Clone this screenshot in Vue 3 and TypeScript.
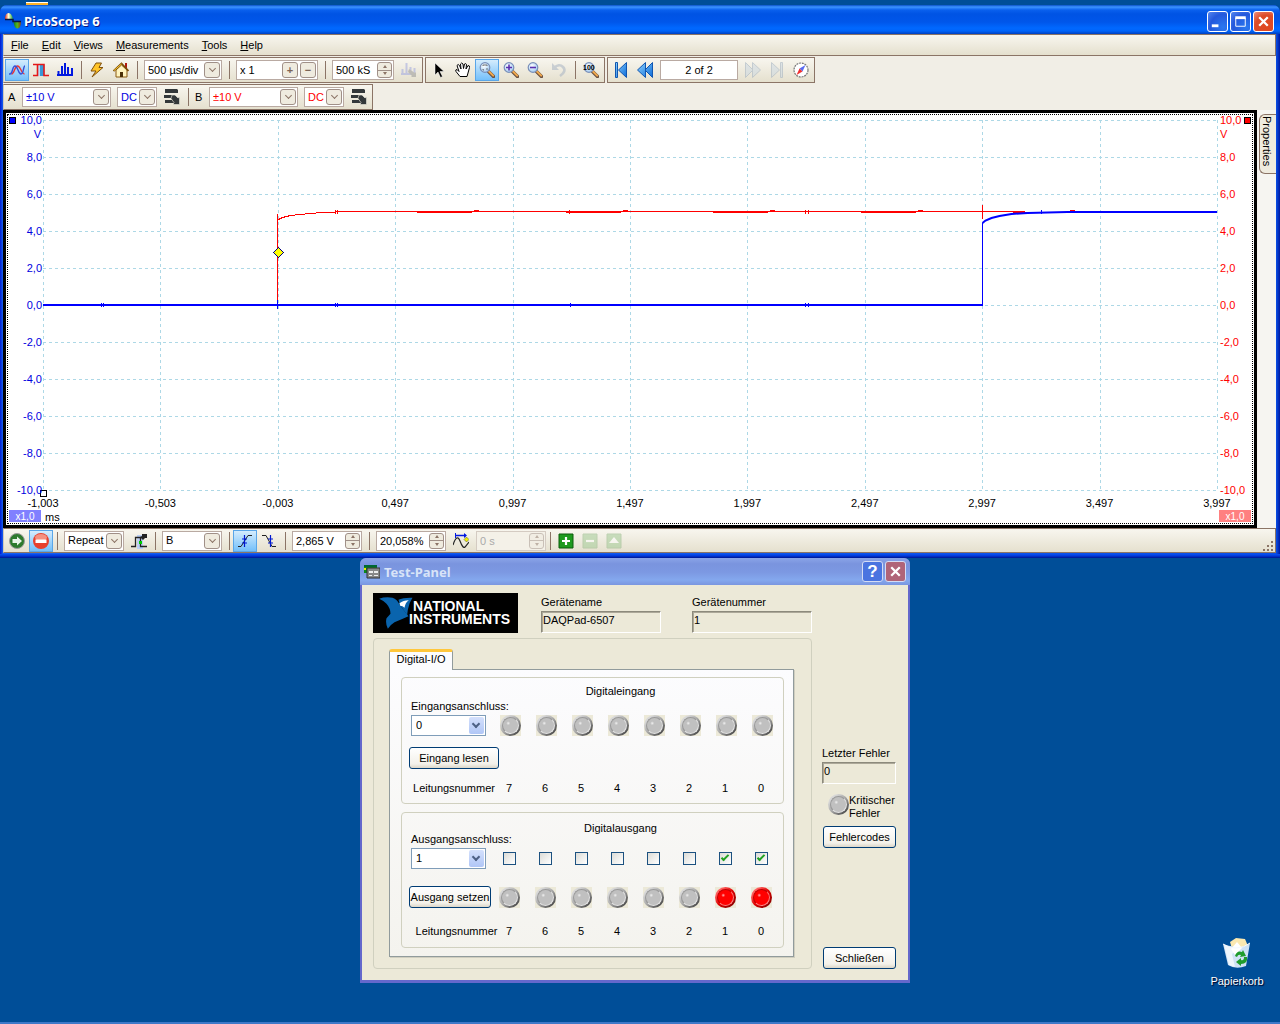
<script setup lang="ts">
import { ref } from 'vue'

const menus = ['File', 'Edit', 'Views', 'Measurements', 'Tools', 'Help']

const plotWidth = 1174
const plotHeight = 370
const voltTicks = ['10,0', '8,0', '6,0', '4,0', '2,0', '0,0', '-2,0', '-4,0', '-6,0', '-8,0', '-10,0']
const timeTicks = ['-1,003', '-0,503', '-0,003', '0,497', '0,997', '1,497', '1,997', '2,497', '2,997', '3,497', '3,997']
const gridX = timeTicks.map((_, i) => Math.round((i * plotWidth) / 10))
const gridY = voltTicks.map((_, i) => (i * plotHeight) / 10)

const glitches = [374, 523, 670, 818, 970]
const zeroMarks = [58, 60, 292, 294, 527, 762, 765]

const lines = [7, 6, 5, 4, 3, 2, 1, 0]
const inputPort = ref('0')
const outputPort = ref('1')
const outputs = ref<Record<number, boolean>>({ 7: false, 6: false, 5: false, 4: false, 3: false, 2: false, 1: true, 0: true })
</script>

<template>
  <div class="desktop">
    <svg class="defs" width="0" height="0" aria-hidden="true">
      <defs>
        <radialGradient id="lens" cx=".4" cy=".35" r=".7">
          <stop offset="0" stop-color="#fff" /><stop offset="1" stop-color="#9cc8f0" />
        </radialGradient>
        <linearGradient id="nav" x1="0" y1="0" x2="1" y2="1">
          <stop offset="0" stop-color="#8fd4ff" /><stop offset="1" stop-color="#0a6ad8" />
        </linearGradient>
        <linearGradient id="hump"><stop offset="0" stop-color="#e03020" /><stop offset=".45" stop-color="#ffffd8" /><stop offset="1" stop-color="#18a030" /></linearGradient>
        <linearGradient id="dip"><stop offset="0" stop-color="#0c7a20" /><stop offset=".5" stop-color="#58b820" /><stop offset="1" stop-color="#8a3c10" /></linearGradient>
        <symbol id="magnifier" viewBox="0 0 16 16">
          <path d="M9.500 9.500l5 5" stroke="#6b5040" stroke-width="3.400" stroke-linecap="round" />
          <path d="M9.800 9.200l4.400 4.400" stroke="#f0a84c" stroke-width="2" stroke-linecap="round" />
          <circle cx="6" cy="5.500" r="4.800" fill="url(#lens)" stroke="#7a8fb8" stroke-width="1.200" />
        </symbol>
        <symbol id="list-edit" viewBox="0 0 16 16">
          <path d="M1 0h12l1 1v3H1zM0 6h9v3H0zM1 11h9v3H1z" fill="#33383a" />
          <path d="M8 6h3l3 3 1.500-1v7.500H9l1-2-3-4z" fill="#33383a" stroke="#efecdf" stroke-width=".6" />
        </symbol>
        <symbol id="cross" viewBox="0 0 20 20">
          <path d="M5.500 5.500l9 9M14.500 5.500l-9 9" stroke="#fff" stroke-width="2.400" />
        </symbol>
      </defs>
    </svg>

    <i class="shortcut-edge"></i>

    <main class="window">
      <header class="titlebar">
        <svg class="app-icon" viewBox="0 0 16 16">
          <path d="M0 6.500Q0 0 3.500 0T8 6.500z" fill="url(#hump)" />
          <path d="M8.500 8H16q0 7.500-3.500 7.500T8.500 8z" fill="url(#dip)" />
          <path d="M0 6.500h8v2h8" fill="none" stroke="#0a1440" stroke-width="1.500" />
        </svg>
        <h1>PicoScope 6</h1>
        <div class="caption-buttons">
          <button class="cap" aria-label="Minimize"><svg viewBox="0 0 20 20"><path d="M4 13h7v3H4z" fill="#fff" /></svg></button>
          <button class="cap" aria-label="Maximize"><svg viewBox="0 0 20 20"><path d="M5 6.500h10V15H5z" fill="none" stroke="#fff" /><path d="M4.500 4.500h11v3h-11z" fill="#fff" /></svg></button>
          <button class="cap close" aria-label="Close"><svg><use href="#cross" /></svg></button>
        </div>
      </header>

      <div class="client">
        <nav class="menubar">
          <button v-for="m in menus" :key="m"><u>{{ m[0] }}</u>{{ m.slice(1) }}</button>
        </nav>

        <div class="tool-row">
          <div class="strip">
            <button class="tool on" aria-label="Scope mode"><svg viewBox="0 0 16 16">
              <path d="M0 12C3 12 3 4 6 4s4 8 7 8" transform="translate(2.500 0)" fill="none" stroke="#e33" stroke-width="1.400" />
              <path d="M0 12h1C4 12 3 4 6 4s3 8 6 8 2-8 4-8" fill="none" stroke="#3550d8" stroke-width="1.400" /></svg></button>
            <button class="tool" aria-label="Persistence mode"><svg viewBox="0 0 16 16">
              <path d="M4 3h8v11H4z" fill="#b4dcf8" /><path d="M7 3h4v11H7z" fill="#3898d8" />
              <path d="M0 13.500h4.500V2.500M0 2.500h11v11H16" fill="none" stroke="#e41818" stroke-width="1.600" /></svg></button>
            <button class="tool" aria-label="Spectrum mode"><svg viewBox="0 0 16 16">
              <path d="M0 13h16M1.500 13V9M5 13V4M8 13V1M11 13V5M15 13V6" stroke="#0018e0" stroke-width="2" /></svg></button>
            <i class="sep"></i>
            <button class="tool" aria-label="Auto setup"><svg viewBox="0 0 16 16">
              <path d="M7 1h5.500L10 5.500h4L3 15l4-6H2z" fill="#ffc428" stroke="#80500c" /></svg></button>
            <button class="tool" aria-label="Home"><svg viewBox="0 0 16 16">
              <path d="M12 1h2v5h-2z" fill="#b01810" /><path d="M3 8v7h11V8L8.500 3z" fill="#fff4c0" stroke="#8a5a10" />
              <path d="M.500 9L8.500 1.500l7 7.500" fill="none" stroke="#7a4c08" stroke-width="1.800" /><path d="M1 8.500L8.500 2" stroke="#ffcc30" />
              <path d="M7 10h3v5H7z" fill="#4a3008" /></svg></button>
            <i class="sep"></i>
            <label class="box w78"><select aria-label="Timebase"><option>500 µs/div</option></select><i class="drop"></i></label>
            <i class="sep"></i>
            <div class="box w82"><input value="x 1" aria-label="Zoom factor" /><button class="step">+</button><button class="step">−</button></div>
            <i class="sep"></i>
            <div class="box w62"><input value="500 kS" aria-label="Samples" /><span class="spin"><button aria-label="Up"></button><button aria-label="Down"></button></span></div>
            <button class="tool faded" aria-label="Spectrum options"><svg viewBox="0 0 16 16">
              <path d="M0 12h15M1.500 12V7M5.500 12V1M9.500 12V5M13.500 12V6" stroke="#a0a8e0" stroke-width="2" />
              <path d="M8 7l6 4 1-1v5h-5l1-1-4-4z" fill="#999" /></svg></button>
          </div>

          <div class="strip">
            <button class="tool" aria-label="Pointer"><svg viewBox="0 0 16 16"><path d="M4 1v12l3-3 2.500 5.500 2-1L9 9.500h4z" fill="#000" stroke="#fff" stroke-width=".5" /></svg></button>
            <button class="tool" aria-label="Hand"><svg viewBox="0 0 16 16">
              <path d="M5 14.500L1 9.500Q0 7.500 2 7.500l2 2-2-6q1-2 2.500 0L6 7 5.500 2q1-2 2.500 0l.500 4.500L9.500 2q1.500-1 2 .5L11 7l2-3.500q2 0 1.500 2L13 11l-1 3.500z" fill="#fff" stroke="#000" /></svg></button>
            <button class="tool on" aria-label="Zoom window"><svg viewBox="0 0 16 16"><use href="#magnifier" /><path d="M4 4V3h4v1M4 7v1h1M8 6v2" fill="none" stroke="#555" stroke-width=".8" /></svg></button>
            <button class="tool" aria-label="Zoom in"><svg viewBox="0 0 16 16"><use href="#magnifier" /><path d="M3 5.500h6M6 2.500v6" stroke="#5a30b0" stroke-width="1.600" /></svg></button>
            <button class="tool" aria-label="Zoom out"><svg viewBox="0 0 16 16"><use href="#magnifier" /><path d="M3 5.500h6" stroke="#5a30b0" stroke-width="1.600" /></svg></button>
            <button class="tool faded" aria-label="Undo zoom"><svg viewBox="0 0 16 16"><path d="M3 6q5-5 9-1t-3 9" fill="none" stroke="#a8b4c4" stroke-width="2.600" /><path d="M1 1v7h7z" fill="#a8b4c4" /></svg></button>
            <i class="sep"></i>
            <button class="tool" aria-label="Zoom 100"><svg viewBox="0 0 16 16"><use href="#magnifier" /><text x="0" y="8" class="hundred">100</text></svg></button>
          </div>

          <div class="strip">
            <button class="tool" aria-label="First"><svg viewBox="0 0 16 16"><path d="M2.500.5h2v15h-2zM13.500.5v15L5.500 8z" fill="url(#nav)" stroke="#1056b0" /></svg></button>
            <button class="tool" aria-label="Previous"><svg viewBox="0 0 16 16"><path d="M8.500.5v15L.500 8zM15.500.5v15L8 8z" fill="url(#nav)" stroke="#1056b0" /></svg></button>
            <div class="box w78"><input class="mid" value="2 of 2" aria-label="Waveform number" /></div>
            <button class="tool faded" aria-label="Next"><svg viewBox="0 0 16 16"><path d="M.500.5v15L8 8zM7.500.5v15L15.500 8z" fill="#cdd9e2" stroke="#a0b0c0" /></svg></button>
            <button class="tool faded" aria-label="Last"><svg viewBox="0 0 16 16"><path d="M2.500.5v15L10.500 8zM11.500.5h2v15h-2z" fill="#cdd9e2" stroke="#a0b0c0" /></svg></button>
            <button class="tool" aria-label="Navigator"><svg viewBox="0 0 16 16">
              <circle cx="8" cy="8" r="7" fill="#fff" stroke="#777" stroke-width="1.200" stroke-dasharray="2 .8" />
              <path d="M12.500 3L9.500 9.500l-3-3z" fill="#5a6cf0" /><path d="M3.500 13l3-6.500 3 3z" fill="#f03030" /></svg></button>
          </div>
        </div>

        <div class="tool-row">
          <div class="strip">
            <span class="chan">A</span>
            <label class="box w89 blue"><select aria-label="Channel A range"><option>±10 V</option></select><i class="drop"></i></label>
            <label class="box w40 blue"><select aria-label="Channel A coupling"><option>DC</option></select><i class="drop"></i></label>
            <button class="tool" aria-label="Channel A options"><svg><use href="#list-edit" /></svg></button>
            <i class="sep"></i>
            <span class="chan">B</span>
            <label class="box w89 red"><select aria-label="Channel B range"><option>±10 V</option></select><i class="drop"></i></label>
            <label class="box w40 red"><select aria-label="Channel B coupling"><option>DC</option></select><i class="drop"></i></label>
            <button class="tool" aria-label="Channel B options"><svg><use href="#list-edit" /></svg></button>
          </div>
        </div>

        <div class="view-row">
          <section class="scope">
            <div class="scope-inner">
              <i class="knob a"></i><i class="knob b"></i>
              <ol class="volts left">
                <li v-for="(v, i) in voltTicks" :key="v">{{ v }}<small v-if="i === 0">V</small></li>
              </ol>
              <svg class="plot" :viewBox="`0 0 ${plotWidth} ${plotHeight}`" preserveAspectRatio="none">
                <g class="grid">
                  <line v-for="x in gridX" :key="'x' + x" :x1="x" :x2="x" y1="0" :y2="plotHeight" />
                  <line v-for="y in gridY" :key="'y' + y" :y1="y" :y2="y" x1="0" :x2="plotWidth" />
                </g>
                <g class="trace-b">
                  <path d="M234.500 185V94M234.500 99h2l3-1.500 6-1.500 8-1.200 14-1.300 12-1 14-.5 5-.5H982" />
                  <path d="M939.500 85v14" />
                  <template v-for="g in glitches" :key="g">
                    <path :d="`M${g} 92.500h55M${g + 57} 90.500h5`" />
                  </template>
                  <path d="M292.500 90v4M294.500 90v4M526.500 90v4M762.500 90v4M765.500 90v4" />
                </g>
                <g class="trace-a">
                  <path d="M0 185H939.500" class="thick" />
                  <path d="M939.500 185V103" />
                  <path d="M939.500 103l3-2.500 6-2.500 8-2 12-2 16-1 40-1H1174" class="bold" />
                  <path d="M234.500 180v9" />
                  <path v-for="m in zeroMarks" :key="m" :d="`M${m}.5 183v4`" />
                  <path d="M998.500 90v4" />
                </g>
                <path d="M235.500 127.500l5 5-5 5-5-5z" fill="#ff0" stroke="#000080" />
                <rect x="-2.500" y="370.500" width="6" height="6" fill="#fff" stroke="#000" />
              </svg>
              <ol class="volts right">
                <li v-for="(v, i) in voltTicks" :key="v">{{ v }}<small v-if="i === 0">V</small></li>
              </ol>
              <ol class="times"><li v-for="t in timeTicks" :key="t"><span>{{ t }}</span></li></ol>
              <div class="scales">
                <b class="chip blue-chip">x1,0</b><span>ms</span><b class="chip red-chip">x1,0</b>
              </div>
            </div>
          </section>
          <aside><button class="props">Properties</button></aside>
        </div>

        <footer class="strip status">
          <button class="tool" aria-label="Start"><svg viewBox="0 0 16 16"><circle cx="8" cy="8" r="7.500" fill="#2d7a2d" stroke="#9a9a9a" /><path d="M3.500 6H8V3.500L13 8l-5 4.500V10H3.500z" fill="#e8f4e8" /></svg></button>
          <button class="tool on" aria-label="Stop"><svg viewBox="0 0 16 16"><circle cx="8" cy="8" r="8" fill="#e8402c" /><ellipse cx="8" cy="4.500" rx="6" ry="3.500" fill="#f49080" /><path d="M2.500 6.500h11v3.500h-11z" fill="#fff" /></svg></button>
          <i class="sep"></i>
          <label class="box w60"><select aria-label="Trigger mode"><option>Repeat</option></select><i class="drop"></i></label>
          <button class="tool" aria-label="Advanced trigger"><svg viewBox="0 0 16 16"><path d="M6 2h6v14H6z" fill="#bcd0f4" /><path d="M0 13.500h4.500v-9h5v9H16" fill="none" stroke="#222" stroke-width="1.300" /><path d="M9 4l2-1V1h5v4h-2l-2 2z" fill="#222" /><path d="M8 8h3v3H8z" fill="#0c0" /></svg></button>
          <i class="sep"></i>
          <label class="box w60"><select aria-label="Trigger channel"><option>B</option></select><i class="drop"></i></label>
          <i class="sep"></i>
          <button class="tool on" aria-label="Rising edge"><svg viewBox="0 0 16 16"><path d="M1 13.500h3l7-11h4" fill="none" stroke="#222" /><path d="M7.500 2v12M5 6h5M5 10h5" stroke="#0018d0" stroke-width="1.200" /></svg></button>
          <button class="tool" aria-label="Falling edge"><svg viewBox="0 0 16 16"><path d="M1 2.500h4l6 11h4" fill="none" stroke="#222" /><path d="M9.500 2v12M7 6h5M7 10h5" stroke="#0018d0" stroke-width="1.200" /></svg></button>
          <i class="sep"></i>
          <div class="box w70"><input value="2,865 V" aria-label="Threshold" /><span class="spin"><button aria-label="Up"></button><button aria-label="Down"></button></span></div>
          <i class="sep"></i>
          <div class="box w70"><input value="20,058%" aria-label="Pre-trigger" /><span class="spin"><button aria-label="Up"></button><button aria-label="Down"></button></span></div>
          <button class="tool" aria-label="Post-trigger delay"><svg viewBox="0 0 16 16"><path d="M0 12q4-12 7-4t5 6l4-5" fill="none" stroke="#222" stroke-width="1.200" /><path d="M3 2.500h10" stroke="#0018e0" stroke-width="1.500" /><path d="M11 0l3 2.500L11 5zM2 0h1v5H2z" fill="#0018e0" /><path d="M13.500 4l2.500 2.500L13.500 9 11 6.500z" fill="#ee0" stroke="#444" stroke-width=".5" /></svg></button>
          <div class="box w70 off"><input value="0 s" disabled aria-label="Delay" /><span class="spin"><button disabled aria-label="Up"></button><button disabled aria-label="Down"></button></span></div>
          <i class="sep tight"></i>
          <button class="tool" aria-label="Add measurement"><svg viewBox="0 0 16 16"><path d="M1 1h14v14H1z" fill="#1f9a1f" stroke="#0c5c0c" /><path d="M4 8h8M8 4v8" stroke="#fff" stroke-width="2.200" /></svg></button>
          <button class="tool faded" aria-label="Delete measurement"><svg viewBox="0 0 16 16"><path d="M1 1h14v14H1z" fill="#a4cc98" stroke="#94b888" /><path d="M4 8h8" stroke="#fff" stroke-width="2.200" /></svg></button>
          <button class="tool faded" aria-label="Edit measurement"><svg viewBox="0 0 16 16"><path d="M1 1h14v14H1z" fill="#a4cc98" stroke="#94b888" /><path d="M8 4l5 6H3z" fill="#fff" /></svg></button>
          <svg class="grip" viewBox="0 0 12 12"><path d="M9 1h2v2H9zM5 5h2v2H5zM9 5h2v2H9zM1 9h2v2H1zM5 9h2v2H5zM9 9h2v2H9z" fill="#8b7466" /></svg>
        </footer>
      </div>
    </main>

    <section class="dialog">
      <header class="dlg-title">
        <svg class="dlg-icon" viewBox="0 0 16 16"><path d="M0 1h13v8H0z" fill="#0a8a1a" /><path d="M0 1h13v2H0z" fill="#063" /><path d="M0 4h2v2H0z" fill="#ee0" /><path d="M3 4h13v10H3z" fill="#888" stroke="#333" /><path d="M5 7h4v2H5zM10 7h4v2h-4zM5 11h3v1H5zM10 11h4v1h-4z" fill="#eee" /></svg>
        <h2>Test-Panel</h2>
        <div class="caption-buttons">
          <button class="cap help" aria-label="Help">?</button>
          <button class="cap close" aria-label="Close"><svg><use href="#cross" /></svg></button>
        </div>
      </header>
      <div class="dlg-body">
        <div class="dlg-main">
          <div class="ident">
            <div class="ni">
              <svg viewBox="58 134 104 96">
                <path d="M58 139Q75 133 98 136Q112 140 120 158L146 192Q128 200 104 210Q94 216 84 229Q76 214 80 198L92 184Q92 168 80 154Q70 144 58 139z" fill="#0a64ad" />
                <path d="M116 142Q130 135 158 136Q148 150 144 172L142 188L120 158z" fill="#0a64ad" />
                <path d="M119 153Q130 144 147 144Q137 150 134 166L128 162L121 160z" fill="#fff" />
              </svg>
              <p>NATIONAL<br /><span>INSTRUMENTS</span></p>
            </div>
            <label>Gerätename<input class="sunken" value="DAQPad-6507" readonly /></label>
            <label>Gerätenummer<input class="sunken" value="1" readonly /></label>
          </div>
          <div class="frame">
            <button class="tab">Digital-I/O</button>
            <div class="pane">
              <fieldset class="io in">
                <h3>Digitaleingang</h3>
                <div class="io-grid">
                  <label for="in-port" class="port-label">Eingangsanschluss:</label>
                  <span class="combo"><select id="in-port" v-model="inputPort"><option>0</option><option>1</option></select></span>
                  <i v-for="n in lines" :key="n" class="led"></i>
                </div>
                <button class="push read">Eingang lesen</button>
                <div class="io-grid nums"><span>Leitungsnummer</span><span v-for="n in lines" :key="n">{{ n }}</span></div>
              </fieldset>
              <fieldset class="io out">
                <h3>Digitalausgang</h3>
                <div class="io-grid">
                  <label for="out-port" class="port-label">Ausgangsanschluss:</label>
                  <span class="combo"><select id="out-port" v-model="outputPort"><option>0</option><option>1</option></select></span>
                  <input v-for="n in lines" :key="n" v-model="outputs[n]" type="checkbox" :aria-label="`Leitung ${n}`" />
                </div>
                <div class="io-grid set">
                  <button class="push write">Ausgang setzen</button>
                  <i v-for="n in lines" :key="n" class="led" :class="{ lit: outputs[n] }"></i>
                </div>
                <div class="io-grid nums"><span>Leitungsnummer</span><span v-for="n in lines" :key="n">{{ n }}</span></div>
              </fieldset>
            </div>
          </div>
        </div>
        <div class="dlg-side">
          <label>Letzter Fehler<input class="sunken" value="0" readonly /></label>
          <div class="critical"><i class="led"></i><span>Kritischer<br />Fehler</span></div>
          <button class="push">Fehlercodes</button>
          <button class="push last">Schließen</button>
        </div>
      </div>
    </section>

    <a href="#" class="bin">
      <svg viewBox="0 0 32 32"><path d="M9 5l6-4 9 1 3 7-16 3z" fill="#fbe8b0" /><path d="M2 7l5 21q8 5 18 1l4-23q-6 5-14 4T2 7z" fill="#cfe2f6" /><path d="M3 8l5 20 6 2-3-13 5-4z" fill="#eef6fd" /><path d="M10 12l6-7 5 6-7 7z" fill="#fff" /><path d="M2 7q5 4 13 4T29 6" fill="none" stroke="#f4f9ff" />
        <path d="M14 19q2-6 7-4l1-2 3 6-6 1 1-2q-3-1-4 2zM26 20q1 7-6 7v2l-5-4 5-4v2q3 1 3-3z" fill="#1f9c2c" /></svg>
      Papierkorb
    </a>
    <i class="taskbar-edge"></i>
  </div>
</template>

<style>
html, body { margin: 0; }
</style>

<style scoped>
.desktop { position: relative; min-height: 100vh; box-sizing: border-box; padding-top: 5px; background: #004e98; overflow: hidden; font: 11px/13px "Liberation Sans", Arial, sans-serif; color: #000; }
.desktop *, .desktop *::before, .desktop *::after { box-sizing: border-box; }
.defs { position: absolute; }
button, input, select { font: inherit; color: inherit; margin: 0; padding: 0; border: 0; background: none; border-radius: 0; }
h1, h2, h3, p, ol { margin: 0; padding: 0; list-style: none; }
.shortcut-edge { position: absolute; left: 26px; top: 2px; width: 22px; height: 3px; background: #ffb428; border-top: 1px solid #fff; }
.taskbar-edge { position: absolute; left: 0; right: 0; bottom: 0; height: 2px; background: #3d78c8; }

.window { position: relative; padding: 0 4px 5px 3px; border-radius: 7px 7px 0 0; background: linear-gradient(90deg, #0019cf, #1660f0 3px, #0a50e8 calc(100% - 4px), #0019a0); }
.window::after { content: ""; position: absolute; left: 0; right: 0; bottom: 0; height: 4px; background: linear-gradient(#0a50f0, #0038d8 50%, #00138c); }
.titlebar { display: flex; align-items: center; height: 29px; margin: 0 -4px 0 -3px; padding: 3px 6px 0 5px; border-radius: 7px 7px 0 0; background: linear-gradient(#0a50c8 0, #3c94ff 2px, #0a60ee 5px, #0053e4 9px, #0056ea 17px, #0068ff 23px, #0064fa 26px, #0040c0 29px); }
.app-icon { flex: none; width: 16px; height: 16px; margin-right: 3px; }
h1, h2 { flex: 1; font: bold 13px/16px "Noto Sans", "Open Sans", sans-serif; color: #fff; text-shadow: 1px 1px 0 #0a1883; }
.caption-buttons { display: flex; gap: 2px; }
.cap { width: 21px; height: 21px; border: 1px solid #fff; border-radius: 3px; background: radial-gradient(circle at 80% 80%, #2a78f0, #2458dc 60%, #5688f0); color: #fff; }
.cap svg { display: block; width: 19px; height: 19px; }
.cap.close { background: radial-gradient(circle at 70% 80%, #e04820, #dc4c28 60%, #ee9080); }

.client { background: #f1eee6; }
.menubar { display: flex; height: 22px; padding-left: 1px; border: 1px solid #8b7466; border-left-color: #cfc8ba; background: linear-gradient(#f8f6ef, #e5e0ce); }
.menubar button { padding: 0 6px; margin-right: 1px; }
.tool-row { display: flex; gap: 2px; height: 27px; padding-top: 1px; }
.strip { display: flex; align-items: center; height: 26px; padding: 0 1px; border: 1px solid #8b7466; background: linear-gradient(#f8f6ef, #e5e0ce); }
.tool-row .strip:first-child { border-left-color: #cfc8ba; }
.tool { flex: none; display: flex; align-items: center; justify-content: center; width: 24px; height: 22px; }
.tool svg { flex: none; width: 16px; height: 16px; fill: none; }
.tool.on { border: 1px solid #5aa6e8; background: linear-gradient(#d4ecfd, #74c0fa); }
.faded { opacity: .55; }
.hundred { font: bold 7px "Liberation Sans", sans-serif; fill: #000; }
.sep { flex: none; width: 8px; height: 18px; background: linear-gradient(#8b7466, #8b7466) 4px 0 / 1px 100% no-repeat; }
.sep.tight { margin-left: -3px; }
.box { flex: none; display: flex; align-items: center; height: 20px; margin: 0 3px; padding: 0 1px; border: 1px solid #b9aaa2; background: #fff; position: relative; }
.box select, .box input { flex: 1; min-width: 0; width: 100%; height: 18px; padding-left: 2px; appearance: none; outline: 0; }
.box .mid { text-align: center; padding: 0; }
.w78 { width: 78px; } .w82 { width: 82px; } .w62 { width: 62px; } .w89 { width: 89px; } .w40 { width: 40px; } .w60 { width: 60px; } .w70 { width: 70px; }
.drop, .step { flex: none; display: flex; align-items: center; justify-content: center; width: 16px; height: 16px; border: 1px solid #a09088; border-radius: 3px; background: #efebdf; }
.drop { position: absolute; right: 1px; top: 1px; pointer-events: none; }
.drop::before { content: ""; width: 5px; height: 5px; margin-top: -3px; border: solid #8b7466; border-width: 0 1px 1px 0; transform: rotate(45deg); }
.step { margin-left: 2px; font-weight: bold; color: #7b6456; }
.spin { flex: none; display: flex; flex-direction: column; width: 15px; height: 16px; border: 1px solid #a09088; border-radius: 3px; background: #efebdf; }
.spin button { flex: 1; display: flex; align-items: center; justify-content: center; }
.spin button + button { border-top: 1px solid #a09088; }
.spin button::before { content: ""; border: 2px solid transparent; border-bottom: 3px solid #8b7466; border-top: 0; }
.spin button + button::before { border-bottom: 0; border-top: 3px solid #8b7466; }
.off { color: #aaa; background: #f4f1e8; border-color: #d4cbc2; }
.off .spin { opacity: .5; }
.chan { width: 14px; padding-left: 3px; }
.blue { color: #0000e0; } .red { color: #f00; }

.view-row { display: flex; }
.scope { flex: 1; min-width: 0; padding: 1px; border: 3px solid #000; background: #fff; }
.scope-inner { position: relative; display: grid; grid-template: 370px 20px 13px / 35px 1fr 35px; padding-top: 5px; border: 1px dotted #000; }
.volts { margin-top: -18px; height: 407px; }
.volts li { position: relative; height: 37px; line-height: 37px; }
.volts small { position: absolute; top: 26px; font-size: 11px; line-height: 13px; }
.left { text-align: right; color: #0000e0; padding-right: 1px; }
.left small { right: 1px; }
.right { color: #f00; padding-left: 3px; }
.right small { left: 0; }
.plot { display: block; width: 100%; height: 370px; overflow: visible; shape-rendering: crispEdges; }
.grid line { stroke: #add8e6; stroke-dasharray: 3 3; vector-effect: non-scaling-stroke; }
.trace-a path, .trace-b path { fill: none; stroke: #f00; vector-effect: non-scaling-stroke; }
.trace-a path { stroke: #00f; }
.trace-a .thick { stroke-width: 2; }
.trace-a .bold { stroke-width: 2; shape-rendering: auto; }
.knob { position: absolute; top: 2px; width: 7px; height: 7px; border: 1px solid #000; background: #00f; }
.knob.a { left: 1px; }
.knob.b { right: 1px; background: #f00; }
.times { grid-column: 2; display: flex; justify-content: space-between; padding-top: 7px; }
.times li { display: flex; justify-content: center; width: 0; white-space: nowrap; }
.scales { grid-column: 1 / -1; display: flex; gap: 4px; padding: 0 1px; line-height: 14px; }
.chip { width: 32px; height: 12px; font-weight: normal; font-size: 10px; line-height: 13px; text-align: center; color: #fff; }
.blue-chip { background: #8080ff; }
.red-chip { margin-left: auto; background: #ff8080; }
aside { width: 19px; padding: 4px 0 0 2px; background: #f6f5f1; }
.props { width: 17px; height: 60px; padding: 0 3px 5px 0; writing-mode: vertical-rl; border: 1px solid #8b7466; border-right: 0; border-radius: 6px 0 0 6px; background: #efebdf; }
.status { position: relative; border-left-color: #cfc8ba; height: 25px; }
.grip { margin-left: auto; align-self: flex-end; width: 12px; height: 12px; }

.dialog { position: absolute; left: 360px; top: 558px; width: 550px; padding: 0 2px 3px; border-radius: 6px 6px 0 0; background: #6468cc; }
.dlg-title { display: flex; align-items: center; height: 27px; margin: 0 -2px; padding: 0 4px; border-radius: 6px 6px 0 0; background: linear-gradient(#8aa4e8, #7a94de 6px, #7c98e2 14px, #84a8ee 22px, #7a96e0); }
.dlg-icon { flex: none; width: 16px; height: 16px; margin-right: 4px; }
h2 { color: #d8e4f8; text-shadow: none; }
.dlg-title .cap { border-color: #d4dcf4; background: #4a74e0; }
.dlg-title .close { background: #b06478; }
.help { font: bold 17px/19px "Liberation Sans", sans-serif; }
.dlg-body { display: flex; gap: 10px; padding: 8px 12px 11px 11px; background: #ece9d8; }
.dlg-main { width: 439px; }
.ident { display: flex; justify-content: space-between; gap: 23px; height: 45px; }
.ident label { flex: 1; padding: 3px 0 0; margin-right: 8px; white-space: nowrap; }
.ident label:last-child { margin-right: 0; }
.ni { display: flex; align-items: center; flex: none; width: 145px; height: 40px; padding-left: 6px; background: #000; color: #fff; }
.ni svg { flex: none; width: 35px; height: 32px; margin-right: -5px; }
.ni p { font: bold 14px/13px "Liberation Sans", Arial, sans-serif; padding-left: 4px; }
.ni span { margin-left: -4px; }
.sunken { display: block; width: 100%; height: 22px; padding: 0 1px 4px; border: 1px solid; border-color: #8c8a7c #fff #fff #8c8a7c; box-shadow: inset 1px 1px 0 #aca899; margin-top: 2px; outline: 0; }
.frame { padding: 10px 17px 11px 15px; border: 1px solid #d0d0bf; border-radius: 4px; }
.tab { position: relative; z-index: 1; display: block; width: 64px; height: 21px; margin-bottom: -1px; padding-bottom: 3px; border: 1px solid #919b9c; border-top: 3px solid #ffc73c; border-bottom: 0; border-radius: 3px 3px 0 0; background: #fcfcfe; }
.pane { display: flex; flex-direction: column; gap: 8px; padding: 7px 9px 8px 11px; border: 1px solid #919b9c; background: linear-gradient(#fcfcfe, #f4f3ee); box-shadow: 1px 1px 0 #d0cebf; }
.io { min-width: 0; margin: 0; padding: 7px 2px 0 8px; border: 1px solid #d0d0bf; border-radius: 4px; }
.in { height: 127px; } .out { height: 136px; padding-top: 9px; }
h3 { font-weight: normal; text-align: center; height: 13px; font-size: 11px; padding-left: 50px; }
.in h3 { margin-bottom: 2px; }
.out h3 { margin-bottom: -2px; }
.io-grid { display: grid; grid-template-columns: 82px repeat(8, 36px); align-items: center; justify-items: center; }
.out .io-grid { grid-template-columns: 81px repeat(8, 36px); }
.port-label { grid-column: 1 / -1; justify-self: start; padding-left: 1px; margin-bottom: 2px; }
.combo { position: relative; justify-self: start; margin-left: 1px; }
.combo select { display: block; width: 75px; height: 21px; padding-left: 4px; border: 1px solid #7f9db9; background: #fff; appearance: none; }
.combo::before { content: ""; position: absolute; right: 2px; top: 2px; width: 15px; height: 17px; border-radius: 2px; background: linear-gradient(#d4e0fc, #b0c6f6); pointer-events: none; }
.combo::after { content: ""; position: absolute; right: 7px; top: 6px; width: 6px; height: 6px; border: solid #4d6185; border-width: 0 2px 2px 0; transform: rotate(45deg); pointer-events: none; }
.led { position: relative; display: block; flex: none; width: 21px; height: 21px; background: #ece9d8; }
.led::before { content: ""; position: absolute; inset: 0; border-radius: 50%; background: linear-gradient(135deg, #d8d8d8 20%, #a8a8a8 50%, #505050 85%); }
.led::after { content: ""; position: absolute; inset: 2px; border: 1px solid #e4e4e4; border-top-color: #999; border-left-color: #999; border-radius: 50%; background: radial-gradient(circle at 35% 35%, #f0f0f0 0, #c0c0c0 2px); }
.led.lit::before { background: linear-gradient(135deg, #ff6060 20%, #e00000 50%, #900000 85%); }
.led.lit::after { border-color: #c00000 #ff8080 #ff8080 #c00000; background: radial-gradient(circle at 35% 35%, #ffb0b0 0, #f00 2px); }
.push { display: block; height: 22px; border: 1px solid #003c74; border-radius: 3px; background: linear-gradient(#fff, #f3f1ea 80%, #dcd6c8); white-space: nowrap; }
.read { width: 90px; margin: 11px 0 13px -1px; }
.write { width: 82px; justify-self: start; margin-left: -1px; }
.nums span:first-child { padding-left: 6px; }
.out .nums span:first-child { padding-left: 12px; }
.nums span + span { padding-right: 2px; }
.out .nums span + span { padding-right: 0; }
.out input { width: 13px; height: 13px; border: 1px solid #1c5180; appearance: none; background: linear-gradient(135deg, #dcdcd7, #fff); display: grid; place-items: center; }
.out input:checked::before { content: ""; width: 4px; height: 8px; margin-top: -3px; border: solid #21a121; border-width: 0 2px 2px 0; transform: rotate(45deg); }
.set { margin: 17px 0; }
.dlg-side { flex: 1; display: flex; flex-direction: column; padding-top: 154px; }
.critical { display: flex; margin: 10px 0 6px 6px; }
.dlg-side .push { margin-left: 1px; }
.dlg-side .last { margin-top: auto; }

.bin { position: absolute; right: 9px; bottom: 36px; display: flex; flex-direction: column; align-items: center; gap: 6px; width: 68px; color: #fff; text-decoration: none; text-shadow: 1px 1px 1px #002; }
.bin svg { width: 32px; height: 32px; }
</style>
